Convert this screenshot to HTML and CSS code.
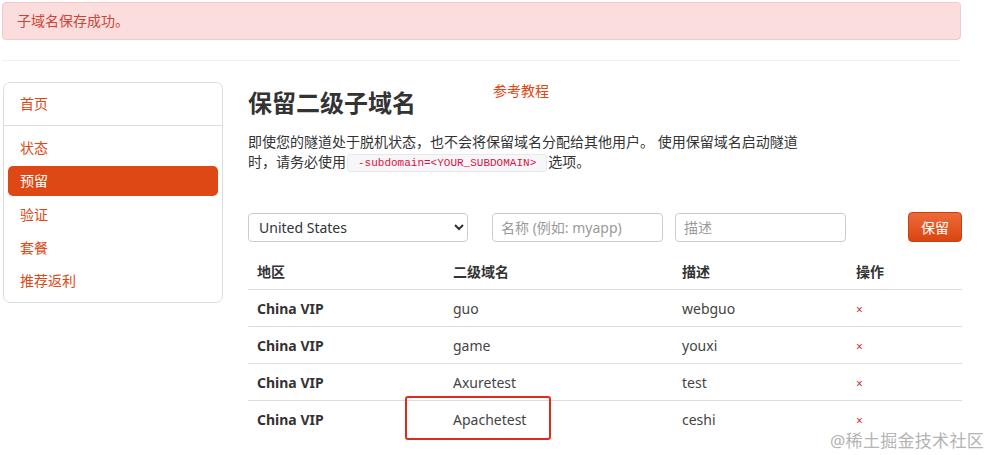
FILE: index.html
```html
<!DOCTYPE html>
<html lang="zh-CN">
<head>
  <meta charset="UTF-8">
  <title>保留二级子域名</title>
  <link rel="stylesheet" href="styles.css">
</head>
<body>
  <div class="page">
    <!-- Flash message -->
    <div class="alert">子域名保存成功。</div>
    <hr class="rule">

    <div class="layout">
      <!-- Side navigation -->
      <nav class="sidebar">
        <div class="nav-group nav-top">
          <a class="nav-item" href="#">首页</a>
        </div>
        <div class="nav-group nav-main">
          <a class="nav-item" href="#">状态</a>
          <a class="nav-item active" href="#">预留</a>
          <a class="nav-item" href="#">验证</a>
          <a class="nav-item" href="#">套餐</a>
          <a class="nav-item" href="#">推荐返利</a>
        </div>
      </nav>

      <!-- Main content -->
      <main class="content">
        <div class="title-row">
          <h1>保留二级子域名</h1>
          <a class="guide-link" href="#">参考教程</a>
        </div>
        <p class="intro">即使您的隧道处于脱机状态，也不会将保留域名分配给其他用户。 使用保留域名启动隧道时，请务必使用<code>-subdomain=&lt;YOUR_SUBDOMAIN&gt;</code>选项。</p>

        <form class="reserve-form">
          <select class="region-select">
            <option>United States</option>
            <option>China VIP</option>
          </select>
          <input type="text" class="field name-field" placeholder="名称 (例如: myapp)">
          <input type="text" class="field desc-field" placeholder="描述">
          <button type="button" class="reserve-button">保留</button>
        </form>

        <div class="table-wrap">
          <table class="domains">
            <thead>
              <tr>
                <th class="col-region">地区</th>
                <th class="col-name">二级域名</th>
                <th class="col-desc">描述</th>
                <th class="col-op">操作</th>
              </tr>
            </thead>
            <tbody>
              <tr><td class="region">China VIP</td><td>guo</td><td>webguo</td><td><a class="delete" href="#">×</a></td></tr>
              <tr><td class="region">China VIP</td><td>game</td><td>youxi</td><td><a class="delete" href="#">×</a></td></tr>
              <tr><td class="region">China VIP</td><td>Axuretest</td><td>test</td><td><a class="delete" href="#">×</a></td></tr>
              <tr><td class="region">China VIP</td><td>Apachetest</td><td>ceshi</td><td><a class="delete" href="#">×</a></td></tr>
            </tbody>
          </table>
          <!-- annotation box drawn on the screenshot -->
          <div class="highlight"></div>
        </div>
      </main>
    </div>
  </div>

  <div class="watermark">@稀土掘金技术社区</div>
</body>
</html>
```

FILE: styles.css
```css
body {
  margin: 0;
  background: #ffffff;
  color: #333333;
  font-family: "Noto Sans", "Noto Sans CJK SC", sans-serif;
  font-size: 14px;
}

.page {
  width: 960px;
  padding: 2px 0 30px 2px;
}

/* Flash message */
.alert {
  height: 36px;
  line-height: 36px;
  padding: 0 14px;
  background: #fadddc;
  border: 1px solid #f1c9cf;
  border-radius: 4px;
  color: #cd4434;
  font-size: 14px;
  width: 929px;
}

.rule {
  border: 0;
  border-top: 1px solid #f0f0f0;
  margin: 20px 0 21px;
  width: 959px;
}

.layout {
  display: flex;
  gap: 25px;
}

/* Sidebar */
.sidebar {
  width: 218px;
  margin-left: 1px;
  border: 1px solid #dddddd;
  border-radius: 7px;
  align-self: flex-start;
}

.nav-group {
  display: flex;
  flex-direction: column;
  gap: 3.25px;
  padding: 6px 4px;
}

.nav-top {
  border-bottom: 1px solid #dddddd;
}

.nav-main {
  padding-top: 7px;
}

.nav-item {
  display: block;
  height: 30px;
  line-height: 30px;
  padding: 0 12px;
  border-radius: 5px;
  color: #dd4814;
  text-decoration: none;
}

.nav-item.active {
  background: #dd4814;
  color: #ffffff;
}

/* Main */
.content {
  width: 714px;
}

.title-row {
  display: flex;
  align-items: flex-start;
  height: 40px;
  padding-top: 1px;
}

h1 {
  margin: 0;
  font-size: 24px;
  line-height: 40px;
  font-weight: bold;
  color: #333333;
}

.guide-link {
  margin-left: 77px;
  color: #dd4814;
  font-size: 14px;
  line-height: 16px;
  text-decoration: none;
}

.intro {
  width: 556px;
  margin: 9px 0 0;
  line-height: 20px;
  color: #333333;
}

code {
  display: inline-block;
  font-family: "Liberation Mono", monospace;
  font-size: 11px;
  line-height: 16px;
  padding: 0 10px;
  margin: 0 1px;
  color: #dd1144;
  background: #f7f7f9;
  border: 1px solid #e8e8ec;
  border-radius: 3px;
  vertical-align: 1px;
}

/* Form */
.reserve-form {
  display: flex;
  align-items: center;
  margin-top: 40px;
}

.region-select {
  width: 220px;
  height: 29px;
  padding: 0 6px;
  border: 1px solid #cccccc;
  border-radius: 4px;
  background: #ffffff;
  color: #333333;
  font-family: inherit;
  font-size: 14px;
}

.field {
  width: 171px;
  height: 29px;
  box-sizing: border-box;
  padding: 0 8px;
  border: 1px solid #cccccc;
  border-radius: 4px;
  font-family: inherit;
  font-size: 14px;
  color: #333333;
}

.field::placeholder {
  color: #9a9a9a;
}

.name-field {
  margin-left: 24px;
}

.desc-field {
  margin-left: 12px;
}

.reserve-button {
  margin-left: auto;
  width: 54px;
  height: 30px;
  border: 1px solid #c9410f;
  border-radius: 4px;
  background: linear-gradient(#ee6a3a, #d9460f);
  color: #ffffff;
  font-family: inherit;
  font-size: 14px;
  padding: 0;
}

/* Table */
.table-wrap {
  position: relative;
  margin-top: 11px;
}

.domains {
  width: 714px;
  border-collapse: collapse;
}

.domains th,
.domains td {
  text-align: left;
  padding: 0 9px;
  height: 36px;
}

.domains th {
  font-weight: bold;
  color: #333333;
  border-bottom: 1px solid #dddddd;
}

.domains tbody tr + tr td {
  border-top: 1px solid #dddddd;
}

.domains td {
  color: #444444;
}

.col-region { width: 178px; }
.col-name { width: 211px; }
.col-desc { width: 156px; }

.domains .region {
  font-weight: bold;
  color: #333333;
}

.delete {
  color: #d2322d;
  font-size: 12px;
  text-decoration: none;
}

.highlight {
  position: absolute;
  left: 157px;
  top: 143px;
  width: 142px;
  height: 40px;
  border: 2px solid #e12a1f;
  border-radius: 3px;
}

.watermark {
  position: absolute;
  left: 830px;
  top: 427px;
  font-size: 17px;
  color: #b4b4b4;
  letter-spacing: 0.3px;
}
```
